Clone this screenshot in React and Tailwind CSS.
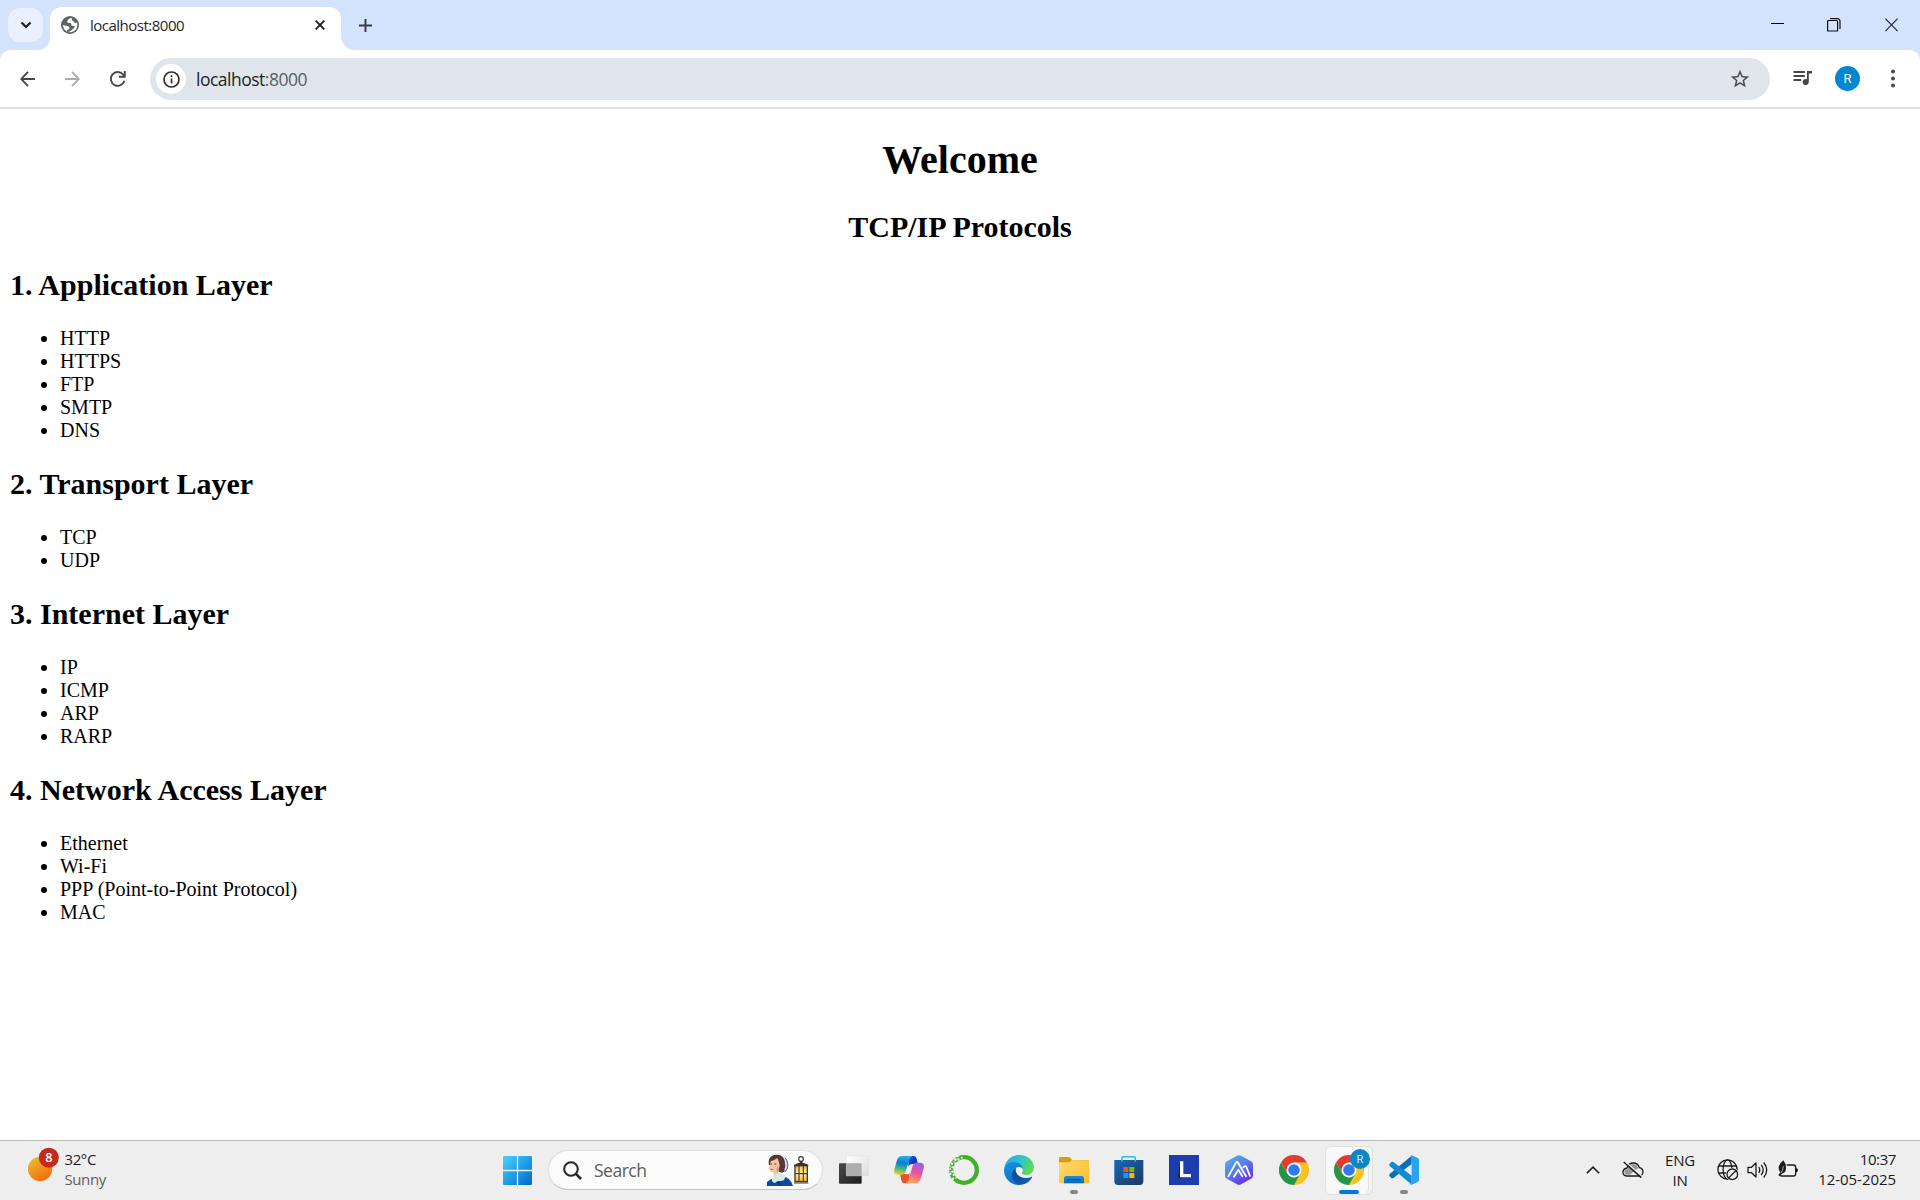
import React from "react";

const layers = [
  { title: "1. Application Layer", items: ["HTTP", "HTTPS", "FTP", "SMTP", "DNS"] },
  { title: "2. Transport Layer", items: ["TCP", "UDP"] },
  { title: "3. Internet Layer", items: ["IP", "ICMP", "ARP", "RARP"] },
  {
    title: "4. Network Access Layer",
    items: ["Ethernet", "Wi-Fi", "PPP (Point-to-Point Protocol)", "MAC"],
  },
];

/* ---------- Browser chrome ---------- */

function GlobeIcon() {
  return (
    <svg className="h-[18px] w-[18px]" viewBox="0 0 54 54">
      <circle cx="27" cy="27" r="27" fill="#5f6368" />
      <path
        d="M32 6C27 7 20 10 19 15C18 20 22 22 27 21C31 21 32 24 31 28C33 32 39 28 41 31C42 35 38 38 34 40C31 46 25 49 19 47C16 45 19 41 24 39C27 36 25 32 21 31L6 27C6 35 10 41 15 45C24 51 37 49 44 41C50 34 50 26 48 19C45 23 41 21 39 17C36 16 33 13 33 10Z"
        fill="#fff"
      />
    </svg>
  );
}

function TabStrip() {
  return (
    <div className="flex h-[50px] items-start bg-[#d3e2fd]">
      <button className="ml-2 mt-2 flex h-[34px] w-[35px] items-center justify-center rounded-xl bg-[#e9f0fe]">
        <svg className="h-[10px] w-3" viewBox="0 0 12 10" fill="none" stroke="#1f1f1f" strokeWidth="2.2">
          <path d="M1.500 2.500 6 7l4.500-4.500" />
        </svg>
      </button>
      <svg className="mt-[38px] -ml-[5px] h-3 w-3" viewBox="0 0 12 12">
        <path d="M12 0A12 12 0 0 1 0 12H12Z" fill="#fff" />
      </svg>
      <div className="mt-[7px] flex h-[43px] w-[291px] items-center rounded-t-xl bg-white pb-[8px] pl-[11px]">
        <GlobeIcon />
        <span className="ml-[11px] w-[226px] whitespace-nowrap text-[15px] leading-5 tracking-[-0.5px] text-[#1f1f1f]">
          localhost:8000
        </span>
        <svg className="-ml-[1px] h-[10px] w-[10px]" viewBox="0 0 10 10" stroke="#1f1f1f" strokeWidth="1.900">
          <path d="M.7.7l8.600 8.600M9.300.7.7 9.300" />
        </svg>
      </div>
      <svg className="mt-[36px] h-[14px] w-[14px]" viewBox="0 0 14 14">
        <path d="M0 0A14 14 0 0 0 14 14H0Z" fill="#fff" />
      </svg>
      <svg className="ml-1 mt-[19px] h-[13px] w-[13px]" viewBox="0 0 13 13" stroke="#3c3c3c" strokeWidth="1.900">
        <path d="M6.500 0v13M0 6.500h13" />
      </svg>
      <div className="ml-auto flex pt-[18px]">
        <svg className="h-[14px] w-[13px]" viewBox="0 0 13 14" stroke="#000">
          <path d="M0 5.500h13" />
        </svg>
        <svg className="ml-[43px] h-[14px] w-[14px]" viewBox="0 0 14 14" fill="none" stroke="#111" strokeWidth="1.200">
          <path d="M.6 3.500a1 1 0 0 1 1-1h8a1 1 0 0 1 1 1v8.900a.6.6 0 0 1-.6.6H1.200a.6.6 0 0 1-.6-.6z" />
          <path d="M3 .6h7.500a2.500 2.500 0 0 1 2.500 2.500V11" />
        </svg>
        <svg className="ml-[44px] mr-[22px] h-[14px] w-[13px]" viewBox="0 0 13 14" stroke="#222" strokeWidth="1.100">
          <path d="M.4.6l12.200 12.600M12.600.6.4 13.200" />
        </svg>
      </div>
    </div>
  );
}

function Toolbar() {
  return (
    <div className="bg-[#d3e2fd]">
      <div className="flex h-[59px] items-start rounded-t-[10px] border-b-2 border-[#e0e0e0] bg-white pt-2">
        <svg className="ml-5 mt-[13px] h-4 w-[15px]" viewBox="0 0 15 16" fill="none" stroke="#474747" strokeWidth="1.900">
          <path d="M15 8H1.500M8 .9 1.200 8 8 15.100" />
        </svg>
        <svg className="ml-[30px] mt-[13px] h-4 w-[15px]" viewBox="0 0 15 16" fill="none" stroke="#ababab" strokeWidth="1.900">
          <path d="M0 8h13.500M7 .9 13.800 8 7 15.100" />
        </svg>
        <svg className="ml-[30px] mt-[13px] h-4 w-4" viewBox="0 0 16 16" fill="none" stroke="#474747" strokeWidth="1.900">
          <path d="M14.400 9.800A6.900 6.900 0 1 1 13 3.400l1.500 1.700" />
          <path d="M14.800 0v5.800H9" />
        </svg>
        <div className="ml-6 flex h-[42px] w-[1620px] items-center rounded-full bg-[#e0e5ec]">
          <div className="ml-[6px] flex h-[30px] w-[30px] items-center justify-center rounded-full bg-white">
            <svg className="h-[17px] w-[17px]" viewBox="0 0 17 17" fill="none" stroke="#303030" strokeWidth="1.700">
              <circle cx="8.500" cy="8.500" r="7.500" />
              <path d="M8.500 7.500v5M8.500 4.200v1.800" />
            </svg>
          </div>
          <span className="ml-[10px] whitespace-nowrap text-[17.500px] leading-6 tracking-[-0.500px] text-[#1f1f1f]">
            localhost<span className="text-[#5a5d61]">:8000</span>
          </span>
          <svg className="ml-auto mr-[19px] h-[22px] w-[22px]" viewBox="0 0 24 24" fill="#474747">
            <path d="M22 9.240l-7.190-.62L12 2 9.190 8.630 2 9.240l5.460 4.730L5.820 21 12 17.270 18.180 21l-1.630-7.030L22 9.240zM12 15.400l-3.760 2.270 1-4.280-3.320-2.880 4.380-.38L12 6.100l1.710 4.040 4.380.38-3.320 2.880 1 4.280L12 15.400z" />
          </svg>
        </div>
        <svg className="ml-[23px] mt-[13px] h-[14px] w-5" viewBox="0 0 20 14">
          <path d="M.5 1h11.300M.5 5h11.300M.5 9h7.700" stroke="#474747" strokeWidth="1.900" />
          <path d="M14 0h5v2.500h-3.200V11a3.100 3.100 0 1 1-1.800-2.800z" fill="#474747" />
        </svg>
        <div className="ml-[22px] mt-2 flex h-[25px] w-[25px] items-center justify-center rounded-full bg-[#0288d1] font-[Roboto] text-[13px] leading-none text-white">
          R
        </div>
        <svg className="ml-[30.500px] mt-[11px] h-[19px] w-1" viewBox="0 0 4 19" fill="#474747">
          <circle cx="2" cy="2.500" r="1.900" />
          <circle cx="2" cy="9.500" r="1.900" />
          <circle cx="2" cy="16.500" r="1.900" />
        </svg>
      </div>
    </div>
  );
}

/* ---------- Page ---------- */

function Page() {
  return (
    <main className="h-[1031px] overflow-hidden bg-white px-[10px] font-['Liberation_Serif','Times_New_Roman',serif] text-[20px] leading-[23px] text-black">
      <h1 className="mt-[28px] text-center text-[40px] font-bold leading-[46px]">Welcome</h1>
      <h2 className="mb-[24px] mt-[27px] text-center text-[30px] font-bold leading-[34px]">TCP/IP Protocols</h2>
      <div className="flex flex-col gap-[25px]">
        {layers.map((layer) => (
          <section key={layer.title}>
            <h2 className="text-[30px] font-bold leading-[34px]">{layer.title}</h2>
            <ul className="mt-[25px] list-disc pl-[50px]">
              {layer.items.map((item) => (
                <li key={item}>{item}</li>
              ))}
            </ul>
          </section>
        ))}
      </div>
    </main>
  );
}

/* ---------- Taskbar icons ---------- */

function WindowsLogo() {
  return (
    <svg className="h-[29px] w-[29px]" viewBox="0 0 88 88">
      <defs>
        <linearGradient id="win" gradientUnits="userSpaceOnUse" x1="0" y1="0" x2="88" y2="88">
          <stop offset="0" stopColor="#4fd2fb" />
          <stop offset=".5" stopColor="#1f9fe8" />
          <stop offset="1" stopColor="#0068c9" />
        </linearGradient>
      </defs>
      <path fill="url(#win)" d="M3 0h39v42H0V3q0-3 3-3zM46 0h39q3 0 3 3v39H46zM0 46h42v42H3q-3 0-3-3zM46 46h42v39q0 3-3 3H46z" />
    </svg>
  );
}

function SearchArt() {
  return (
    <svg className="h-8 w-[42px]" viewBox="0 0 126 96">
      <defs>
        <linearGradient id="glow" x1="0" y1="0" x2="0" y2="1">
          <stop offset="0" stopColor="#f3b62f" />
          <stop offset=".5" stopColor="#fff3ae" />
          <stop offset="1" stopColor="#f2a91f" />
        </linearGradient>
      </defs>
      <path d="M42 5q20 4 22 28 0 14-9 20l-12-8z" fill="#cfdef4" />
      <path d="M55 12q12 16 5 34l-7 7" stroke="#24418f" strokeWidth="2.500" fill="none" />
      <path d="M6 34Q2 14 14 6 26-1 40 4q14 8 14 26 2 10-2 16 4 6-6 10l-10-2L20 24 8 34z" fill="#5a3731" />
      <path d="M11 22q10-2 20-10 6 10 7 22 0 10-6 14l2 16-14 6V55q-10 1-12-7l-4-6 4-6z" fill="#f2c4a5" />
      <path d="M32 36l5 12-5 8-4-8z" fill="#d99578" />
      <path d="M10 30h5M22 30h6" stroke="#42322f" strokeWidth="3" />
      <path d="M11 46h7" stroke="#c3564e" strokeWidth="3" />
      <path d="M0 96V84q10-10 24-11l22-8q26 6 32 31z" fill="#15489c" />
      <path d="M14 77l8-13 12-6 8-1 16 9-8 13-18 5-11 3-5-5z" fill="#d2eced" />
      <path d="M26 84l12-4 3 16" fill="#0d3477" />
      <circle cx="102" cy="15" r="7" fill="none" stroke="#383838" strokeWidth="3.500" />
      <path d="M100 21h5l2 5q13 2 17 8H82q5-6 16-8z" fill="#333" />
      <rect x="84" y="35" width="37" height="48" fill="url(#glow)" stroke="#3b3935" strokeWidth="4" />
      <path d="M96 34v50M109 34v50M83 59h39M81 87h43" stroke="#4b4235" strokeWidth="3.500" />
      <path d="M81 34h43" stroke="#333" strokeWidth="4" />
    </svg>
  );
}

function TaskViewIcon() {
  return (
    <svg className="h-[30px] w-[30px]" viewBox="0 0 90 90">
      <defs>
        <linearGradient id="tvd" x1="0" y1="0" x2="1" y2="1">
          <stop offset="0" stopColor="#4a4a4a" />
          <stop offset="1" stopColor="#1d1d1d" />
        </linearGradient>
        <linearGradient id="tvw" x1="0" y1="0" x2="1" y2="1">
          <stop offset="0" stopColor="#fff" />
          <stop offset="1" stopColor="#dcdcdc" />
        </linearGradient>
      </defs>
      <rect x="0" y="25" width="68" height="61" rx="3" fill="url(#tvd)" />
      <rect x="22" y="3" width="67" height="60" rx="3" fill="url(#tvw)" stroke="#ddd" />
      <path d="M22 25h43q3 0 3 3v35H25q-3 0-3-3z" fill="#adadad" />
    </svg>
  );
}

function CopilotIcon() {
  return (
    <svg className="h-[30px] w-[30px]" viewBox="0 0 90 90">
      <defs>
        <linearGradient id="cp1" x1=".4" y1="0" x2=".2" y2="1">
          <stop offset="0" stopColor="#2ba9ee" />
          <stop offset=".35" stopColor="#087ed0" />
          <stop offset=".65" stopColor="#40b586" />
          <stop offset="1" stopColor="#f4d31c" />
        </linearGradient>
        <linearGradient id="cp2" x1=".6" y1="0" x2=".3" y2="1">
          <stop offset="0" stopColor="#9b60f0" />
          <stop offset=".45" stopColor="#e8509c" />
          <stop offset="1" stopColor="#ffad5b" />
        </linearGradient>
        <linearGradient id="cp3" x1="0" y1="0" x2="1" y2="1">
          <stop offset="0" stopColor="#1b50d8" />
          <stop offset="1" stopColor="#0b2bae" />
        </linearGradient>
      </defs>
      <path d="M44 3h15q7 0 9 9l4 15H54q-8 0-11 8z" fill="url(#cp3)" />
      <path d="M46 85H31q-7 0-9-9l-4-19h18q8 4 11-4z" fill="#ee5130" />
      <path d="M25 3h31q-8 3-11 14L35 49q-3 10-12 10H12Q-3 59 1 43L9 16Q13 3 25 3z" fill="url(#cp1)" />
      <path d="M65 85H34q8-3 11-14l10-36q3-12 12-12h11q15 0 11 18l-8 27q-4 17-16 17z" fill="url(#cp2)" />
    </svg>
  );
}

function AnacondaIcon() {
  return (
    <svg className="h-[30px] w-[30px]" viewBox="0 0 90 90">
      <circle cx="45" cy="45" r="38.500" fill="none" stroke="#43b02a" strokeWidth="13" />
      <g fill="#eee">
        <circle cx="19" cy="14" r="4" />
        <circle cx="29" cy="13" r="3" />
        <circle cx="38" cy="8" r="3" />
        <circle cx="9" cy="26" r="3.500" />
        <circle cx="19" cy="26" r="3.500" />
        <circle cx="12" cy="37" r="3.500" />
        <circle cx="3" cy="42" r="3" />
        <circle cx="11" cy="49" r="3.500" />
        <circle cx="4" cy="57" r="3.500" />
        <circle cx="14" cy="60" r="3.500" />
        <circle cx="12" cy="71" r="3.500" />
        <circle cx="21" cy="69" r="2.500" />
        <circle cx="27" cy="4" r="3" />
        <circle cx="3" cy="32" r="2" />
        <circle cx="42" cy="14" r="2" />
      </g>
      <path d="M24 8l6 16M12 20l14 4M2 36l17 0M0 50l17 4" stroke="#eee" strokeWidth="2" />
    </svg>
  );
}

function EdgeIcon() {
  return (
    <svg className="h-[30px] w-[30px]" viewBox="0 0 90 90">
      <defs>
        <linearGradient id="ed1" x1="0" y1=".2" x2="1" y2=".6">
          <stop offset="0" stopColor="#28a9e8" />
          <stop offset=".5" stopColor="#30c4c8" />
          <stop offset="1" stopColor="#62dd4c" />
        </linearGradient>
        <linearGradient id="ed2" x1="0" y1="0" x2=".5" y2="1">
          <stop offset="0" stopColor="#1696dd" />
          <stop offset="1" stopColor="#0b6fcf" />
        </linearGradient>
        <linearGradient id="ed3" x1="0" y1="0" x2="1" y2="1">
          <stop offset="0" stopColor="#0d4590" />
          <stop offset="1" stopColor="#1163b6" />
        </linearGradient>
      </defs>
      <path d="M1 40C4 16 23 0 46 0c26 0 44 18 44 37 0 15-11 23-22 23-9 0-15-3-15-6 0-2 4-4 4-10 0-9-9-19-25-19C17 25 5 31 1 40z" fill="url(#ed1)" />
      <path d="M0 46c0-14 13-25 29-25 18 0 28 12 28 23-3-7-8-8-13-8-9 0-17 9-17 22 0 16 12 29 26 31-3 1-6 1-9 1C19 90 0 70 0 46z" fill="url(#ed2)" />
      <path d="M37 38c-9 4-13 13-13 22 0 17 14 29 28 29 14-2 25-10 32-21 1-2-1-3-3-2-5 2-9 3-15 3-18 0-31-12-31-24 0-3 1-5 2-7z" fill="url(#ed3)" />
    </svg>
  );
}

function FolderIcon() {
  return (
    <svg className="h-[30px] w-[30px]" viewBox="0 0 90 90">
      <defs>
        <linearGradient id="fo" x1="0" y1="0" x2="1" y2="1">
          <stop offset="0" stopColor="#ffdd72" />
          <stop offset="1" stopColor="#fcba26" />
        </linearGradient>
        <linearGradient id="fb" x1="0" y1="0" x2="0" y2="1">
          <stop offset="0" stopColor="#1592e1" />
          <stop offset="1" stopColor="#0a64b8" />
        </linearGradient>
      </defs>
      <path d="M0 10q0-4 4-4h25q3 0 5 2l5 7h48q3 0 3 3v12H0z" fill="#dd9a0b" />
      <path d="M0 22h30q4 0 8-6h49q3 0 3 3v63q0 3-3 3H3q-3 0-3-3z" fill="url(#fo)" />
      <path d="M15 85V70q0-7 7-7h46q7 0 7 7v15z" fill="url(#fb)" />
      <path d="M24 74h42" stroke="#084a8d" strokeWidth="3" />
    </svg>
  );
}

function StoreIcon() {
  return (
    <svg className="h-[30px] w-[30px]" viewBox="0 0 90 90">
      <defs>
        <linearGradient id="st" x1="0" y1="0" x2="1" y2="1">
          <stop offset="0" stopColor="#1069bd" />
          <stop offset="1" stopColor="#25365c" />
        </linearGradient>
      </defs>
      <path d="M1 15h87v64q0 11-11 11H12Q1 90 1 79z" fill="url(#st)" />
      <path d="M24 20V9q0-4 4-4h32q4 0 4 4v11" fill="none" stroke="#27bdf0" strokeWidth="4.500" />
      <path d="M28 36h15v15H28z" fill="#f25022" />
      <path d="M46 36h15v15H46z" fill="#7fba00" />
      <path d="M28 54h15v15H28z" fill="#00a4ef" />
      <path d="M46 54h15v15H46z" fill="#ffb900" />
    </svg>
  );
}

function LTile() {
  return (
    <svg className="h-[30px] w-[30px]" viewBox="0 0 90 90">
      <path d="M0 0h90v90H0z" fill="#1d3cae" />
      <path d="M33 20 26 70h10l28-3-28-8z" fill="#052f5c" />
      <path d="M33 19h10v38h23v10H33z" fill="#fff" />
    </svg>
  );
}

function HexIcon() {
  return (
    <svg className="h-[30px] w-[30px]" viewBox="0 0 90 90">
      <defs>
        <linearGradient id="hx" x1=".1" y1="0" x2=".8" y2="1">
          <stop offset="0" stopColor="#56b5ea" />
          <stop offset=".5" stopColor="#5a78ea" />
          <stop offset="1" stopColor="#6b22ee" />
        </linearGradient>
      </defs>
      <path d="M39 2q6-3 12 0l30 17q6 3 6 9v34q0 6-6 9L51 88q-6 3-12 0L9 71q-6-3-6-9V28q0-6 6-9z" fill="url(#hx)" />
      <g fill="none" stroke="#fff" strokeWidth="5.500" strokeLinecap="round" strokeLinejoin="round">
        <path d="M13 64 36 23q3-5 6 0l24 41" />
        <path d="M30 65 43 44l12 20" />
        <path d="M58 37l4-3q3-2 5 2l11 27" />
      </g>
    </svg>
  );
}

function ChromeIcon() {
  return (
    <svg className="h-[30px] w-[30px]" viewBox="0 0 90 90">
      <path d="M45 22.500h39A45 45 0 0 1 45 90l19.500-34z" fill="#fcc31e" />
      <path d="M6 22.500A45 45 0 0 0 45 90l19.500-33.800L45 60 25.500 56.200z" fill="#269547" />
      <path d="M45 22.500h39A45 45 0 0 0 6 22.500l19.500 33.700z" fill="#e33b2e" />
      <circle cx="45" cy="45" r="22.500" fill="#fff" />
      <circle cx="45" cy="45" r="17.500" fill="#2c7bf0" />
    </svg>
  );
}

function VsCodeIcon() {
  return (
    <svg className="h-[30px] w-[30px]" viewBox="0 0 90 90">
      <path d="M2 57q-3 4 0 7l5 5q3 2 6 0l55-42V2z" fill="#0a6eb6" />
      <path d="M2 33q-3-4 0-7l5-5q3-2 6 0l55 41v27z" fill="#0f8bd2" />
      <path d="M68 1l18 8q4 2 4 6v60q0 4-4 6l-18 8q-2 1-4 0 4-3 4-7V8q0-5-4-7 2-1 4 0z" fill="#2aa4ef" />
    </svg>
  );
}

const apps = [
  { name: "Task View", Icon: TaskViewIcon },
  { name: "Copilot", Icon: CopilotIcon },
  { name: "Anaconda", Icon: AnacondaIcon },
  { name: "Edge", Icon: EdgeIcon },
  { name: "File Explorer", Icon: FolderIcon, state: "open" },
  { name: "Store", Icon: StoreIcon },
  { name: "L", Icon: LTile },
  { name: "Studio", Icon: HexIcon },
  { name: "Chrome", Icon: ChromeIcon },
  { name: "Chrome profile", Icon: ChromeIcon, state: "active" },
  { name: "VS Code", Icon: VsCodeIcon, state: "open" },
];

function AppButton({ Icon, state }) {
  return (
    <div className="relative flex h-[59px] w-[55px] justify-center pt-[14px]">
      {state === "active" && (
        <>
          <div className="absolute left-[9.500px] top-[5px] h-[49px] w-[42px] rounded-[6px] border border-[#e0e0e0] bg-[#f4f4f4]" />
          <div className="absolute left-[3.500px] top-[5px] h-[49px] w-[44px] rounded-[6px] border border-[#e2e2e2] bg-[#f9f9f9]" />
        </>
      )}
      <div className="relative h-[30px] w-[30px]">
        <Icon />
      </div>
      {state === "active" && (
        <div className="absolute left-[28.500px] top-2 flex h-5 w-5 items-center justify-center rounded-full bg-[#0a86c9] font-[Roboto] text-[11px] leading-none text-[#d5ecf8]">
          R
        </div>
      )}
      {state === "open" && <div className="absolute left-[23.500px] top-[49px] h-1 w-2 rounded-full bg-[#858585]" />}
      {state === "active" && <div className="absolute left-[17.500px] top-[49px] h-1 w-5 rounded-full bg-[#0078d4]" />}
    </div>
  );
}

function Weather() {
  return (
    <div className="flex w-[200px] items-start pt-[6px]">
      <svg className="ml-7 h-[36px] w-[31px]" viewBox="0 0 93 108">
        <defs>
          <linearGradient id="sun" x1=".2" y1=".1" x2=".7" y2="1">
            <stop offset="0" stopColor="#edb72f" />
            <stop offset="1" stopColor="#f06a0d" />
          </linearGradient>
        </defs>
        <circle cx="36" cy="66" r="36.500" fill="url(#sun)" />
        <circle cx="62.500" cy="32" r="30" fill="#c42b1c" />
        <text x="62.500" y="45" textAnchor="middle" fontSize="38" fontWeight="600" fill="#fff" fontFamily="Open Sans, sans-serif">
          8
        </text>
      </svg>
      <div className="ml-[5.500px] mt-[2px] whitespace-nowrap text-[15px] leading-5 tracking-[-0.400px] text-[#1f1f1f]">
        <div>32°C</div>
        <div className="text-[#5f5f5f]">Sunny</div>
      </div>
    </div>
  );
}

function Tray() {
  return (
    <div className="flex h-[59px] items-start text-[15px] leading-5 text-[#1b1b1b]">
      <svg className="mt-[25px] h-2 w-[14px]" viewBox="0 0 14 8" fill="none" stroke="#1b1b1b" strokeWidth="1.600">
        <path d="M.8 7.200 7 1.200l6.200 6" />
      </svg>
      <svg className="ml-[22px] mt-5 h-[18px] w-[22px]" viewBox="0 0 66 54">
        <path d="M14 45Q2 44 3 32q2-10 12-11Q20 6 34 6q14 0 18 14 11 2 11 13-1 11-12 12z" fill="#eee" stroke="#1b1b1b" strokeWidth="4" />
        <path d="M17 23q4-13 17-14 12 1 15 13l-13 8-11 11H14Q6 39 7 32q1-7 10-9z" fill="#999" />
        <path d="M9 1 62 48" stroke="#eee" strokeWidth="4" />
        <path d="M5 3 58 50" stroke="#1b1b1b" strokeWidth="4.500" />
      </svg>
      <div className="ml-[18px] mt-[9px] w-[36px] text-center tracking-[-0.200px]">
        <div>ENG</div>
        <div>IN</div>
      </div>
      <svg className="ml-[19px] mt-[18px] h-[22px] w-[22px]" viewBox="0 0 22 22" fill="none" stroke="#1b1b1b" strokeWidth="1.300">
        <circle cx="10.500" cy="10.500" r="9.600" />
        <ellipse cx="10.500" cy="10.500" rx="4.400" ry="9.600" />
        <path d="M1.500 7h18M1.500 14h18" />
        <circle cx="15.300" cy="15.300" r="6.500" fill="#eee" stroke="none" />
        <circle cx="15.300" cy="15.300" r="5.300" />
        <path d="M11.500 19.100l7.600-7.600" />
      </svg>
      <svg className="ml-[8px] mt-[20px] h-[18px] w-[21px]" viewBox="0 0 21 18" fill="none" stroke="#1b1b1b" strokeWidth="1.300">
        <path d="M1 6.300h3.500L9 2v14l-4.500-4.300H1z" strokeLinejoin="round" />
        <path d="M11.800 6q2 3 0 6M14.200 3.800q4 5.200 0 10.400M16.700 1.500q6 7.500 0 15" />
      </svg>
      <svg className="ml-[9px] mt-[19px] h-[18px] w-[22px]" viewBox="0 0 66 54">
        <path d="M29 15h20q7 0 7 7v19q0 7-7 7H14q-5 0-8-4" fill="none" stroke="#1b1b1b" strokeWidth="4" />
        <path d="M57 25h2q4 1 4 6t-4 6h-2z" fill="#1b1b1b" />
        <path d="M19 1q8 9 8 22 0 14-10 17L8 47l-3-3 5-7Q4 30 5 20q2-10 14-19z" fill="#1b1b1b" />
        <path d="M19 19q-1 12-7 20" stroke="#eee" strokeWidth="2" fill="none" />
      </svg>
      <div className="ml-[18px] mr-[24px] mt-[8px] w-[79px] whitespace-nowrap text-right">
        <div className="tracking-[-0.400px]">10:37</div>
        <div className="tracking-[-0.050px]">12-05-2025</div>
      </div>
    </div>
  );
}

function Taskbar() {
  return (
    <footer className="flex h-[60px] border-t border-[#b9b9b9] bg-[#eeeeee]">
      <Weather />
      <div className="ml-[303px] flex">
        <div className="mt-[15px]">
          <WindowsLogo />
        </div>
        <div className="ml-[16px] mt-[9px] flex h-10 w-[275px] items-center rounded-full border border-[#dedede] border-b-[#c4c4c4] bg-[#fbfbfb]">
          <svg className="ml-[14px] h-[19px] w-[19px]" viewBox="0 0 19 19" fill="none" stroke="#262626" strokeWidth="2">
            <circle cx="8" cy="8" r="6.800" />
            <path d="M12.700 12.700l5.300 5.300" strokeWidth="2.600" />
          </svg>
          <span className="ml-[12px] text-[17.500px] leading-6 tracking-[-0.500px] text-[#5d5d5d]">Search</span>
          <div className="ml-auto mr-[13px]">
            <SearchArt />
          </div>
        </div>
        <div className="ml-[3.500px] flex">
          {apps.map((app) => (
            <AppButton key={app.name} {...app} />
          ))}
        </div>
      </div>
      <div className="ml-auto">
        <Tray />
      </div>
    </footer>
  );
}

export default function App() {
  return (
    <div className="flex h-[1200px] w-[1920px] flex-col overflow-hidden bg-white font-['Open_Sans','Noto_Sans',sans-serif]">
      <TabStrip />
      <Toolbar />
      <Page />
      <Taskbar />
    </div>
  );
}
